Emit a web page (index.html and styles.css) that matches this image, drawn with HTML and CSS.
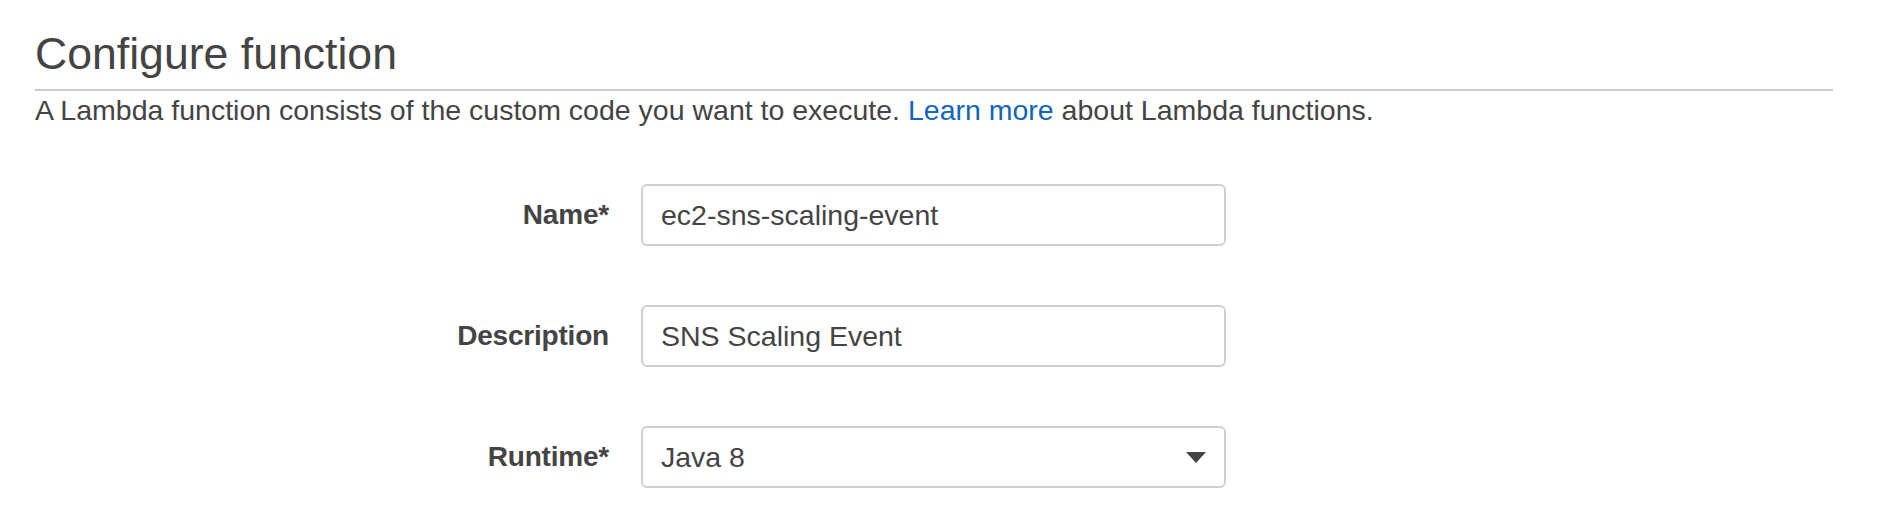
FILE: index.html
```html
<!DOCTYPE html>
<html lang="en">
<head>
<meta charset="utf-8">
<title>Configure function</title>
<link rel="stylesheet" href="styles.css">
</head>
<body>
<div class="page">
  <h1 class="title">Configure function</h1>
  <p class="intro">A Lambda function consists of the custom code you want to execute. <a class="link" href="#">Learn more</a> about Lambda functions.</p>
  <div class="form">
    <label class="label" for="fn-name">Name*</label>
    <input class="field" id="fn-name" type="text" value="ec2-sns-scaling-event">
    <label class="label" for="fn-desc">Description</label>
    <input class="field" id="fn-desc" type="text" value="SNS Scaling Event">
    <span class="label">Runtime*</span>
    <div class="field select">
      <span class="select-value">Java 8</span>
      <svg class="caret" width="20" height="11" viewBox="0 0 20 11" aria-hidden="true"><path d="M0 0H20L10 11Z" fill="#444"/></svg>
    </div>
  </div>
</div>
</body>
</html>
```

FILE: styles.css
```css
html, body {
  margin: 0;
  padding: 0;
  background: #ffffff;
}

body {
  font-family: "Liberation Sans", Arial, sans-serif;
  color: #444444;
}

.page {
  padding: 29px 49px 0 35px;
}

.title {
  margin: 0;
  font-size: 44.6px;
  line-height: 50px;
  font-weight: normal;
  padding-bottom: 10px;
  border-bottom: 2px solid #cccccc;
}

.intro {
  margin: 3px 0 0;
  font-size: 28.5px;
  line-height: 32px;
}

.link {
  color: #1166bb;
  text-decoration: none;
}

.form {
  margin-top: 58px;
  display: grid;
  grid-template-columns: 574px 585px;
  column-gap: 32px;
  row-gap: 59px;
  align-items: center;
}

.label {
  text-align: right;
  font-weight: bold;
  font-size: 28px;
  line-height: 30px;
  letter-spacing: -0.2px;
  color: #444444;
}

.field {
  box-sizing: border-box;
  height: 62px;
  width: 585px;
  margin: 0;
  padding: 0 18px;
  border: 2px solid #d0d0d0;
  border-radius: 6px;
  background: #ffffff;
  font-family: "Liberation Sans", Arial, sans-serif;
  font-size: 28.5px;
  color: #444444;
  outline: none;
}

.select {
  display: flex;
  align-items: center;
  justify-content: space-between;
}

.caret {
  display: block;
}
```
